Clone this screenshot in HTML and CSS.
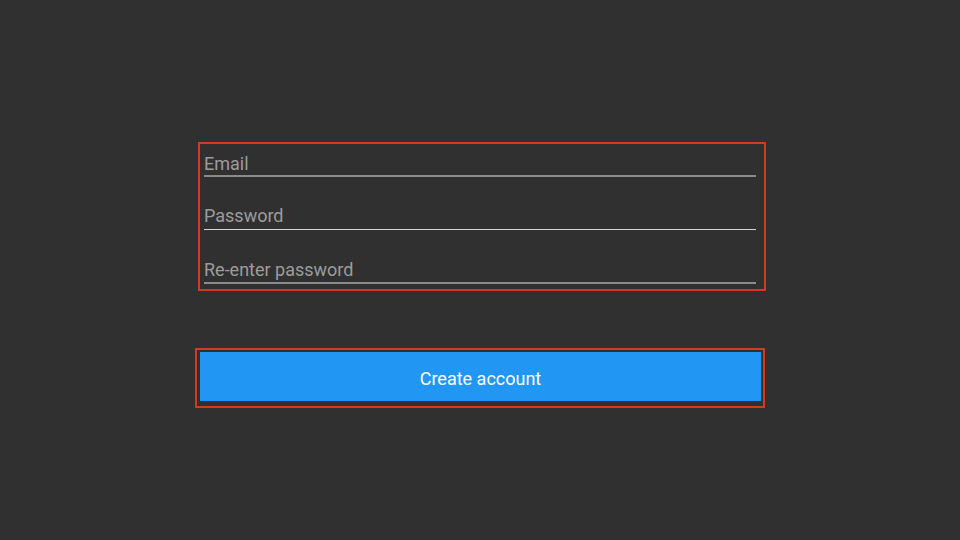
FILE: index.html
```html
<!DOCTYPE html>
<html>
<head>
<meta charset="utf-8">
<link rel="stylesheet" href="styles.css">
</head>
<body>
<main class="page">
  <section class="fields">
    <div class="field field-first">Email</div>
    <div class="field field-focused">Password</div>
    <div class="field field-last">Re-enter password</div>
  </section>
  <div class="button-frame">
    <button class="create-btn" type="button">Create account</button>
  </div>
</main>
</body>
</html>
```
FILE: styles.css
```css
html, body {
  margin: 0;
  padding: 0;
  background: #303030;
}
body {
  width: 960px;
  height: 540px;
  overflow: hidden;
  font-family: Roboto, "Noto Sans", sans-serif;
}
.page {
  display: flex;
  flex-direction: column;
  align-items: flex-start;
  padding: 142px 0 0 195px;
}
.fields {
  margin-left: 3px;
  border: 2px solid #d43a23;
  padding: 0 8px 5px 4px;
  box-sizing: border-box;
  width: 568px;
  display: flex;
  flex-direction: column;
}
.field {
  font-size: 18px;
  line-height: 22px;
  color: #9c9c9c;
  border-bottom: 2px solid #8a8a8a;
}
.field-first {
  margin-top: 9px;
  padding-bottom: 0;
}
.field-focused {
  margin-top: 28px;
  padding-bottom: 2px;
  border-bottom: 1px solid #d6d6d6;
}
.field-last {
  margin-top: 29px;
  padding-bottom: 1px;
}
.button-frame {
  margin-top: 57px;
  border: 2px solid #d43a23;
  padding: 2px 2px 5px 3px;
}
.create-btn {
  display: block;
  width: 561px;
  height: 49px;
  border: none;
  margin: 0;
  padding: 3px 0 0 0;
  background: #2196f3;
  color: #ffffff;
  font-family: Roboto, "Noto Sans", sans-serif;
  font-size: 18px;
}
```
